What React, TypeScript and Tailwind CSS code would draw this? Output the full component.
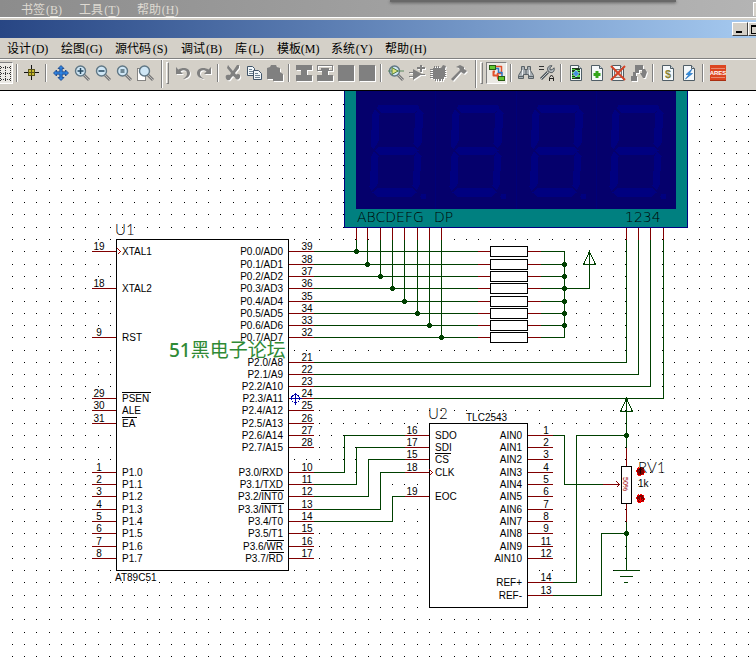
import React from 'react';
import clsx from 'clsx';

type MenuEntry = { label: string; hotkey: string };

const outerMenu: MenuEntry[] = [
  { label: '书签', hotkey: 'B' },
  { label: '工具', hotkey: 'T' },
  { label: '帮助', hotkey: 'H' },
];

const mainMenu: MenuEntry[] = [
  { label: '设计', hotkey: 'D' },
  { label: '绘图', hotkey: 'G' },
  { label: '源代码', hotkey: 'S' },
  { label: '调试', hotkey: 'B' },
  { label: '库', hotkey: 'L' },
  { label: '模板', hotkey: 'M' },
  { label: '系统', hotkey: 'Y' },
  { label: '帮助', hotkey: 'H' },
];

const MenuItem: React.FC<MenuEntry & { underline?: boolean }> = ({ label, hotkey, underline }) => (
  <button className="flex items-baseline whitespace-nowrap text-[12px] leading-4">
    {label}
    <span className="flex w-[18px] justify-center font-['Liberation_Serif',serif] text-[12px]">
      (<span className={clsx(underline && 'underline underline-offset-2')}>{hotkey}</span>)
    </span>
  </button>
);

/* ---------- Toolbar icons ---------- */

const Disabled: React.FC<{ children: React.ReactNode }> = ({ children }) => (
  <>
    <g transform="translate(1 1)" fill="#fff">{children}</g>
    <g fill="#808080">{children}</g>
  </>
);

const Lens: React.FC<{ children?: React.ReactNode }> = ({ children }) => (
  <>
    <path d="M10 10l5 5" stroke="#777" strokeWidth="3" />
    <path d="M10 10l5 5" stroke="#b9b9b9" strokeWidth="1" />
    <circle cx="6.5" cy="6" r="5" fill="#cfe6f5" stroke="#5f7684" strokeWidth="1.4" />
    {children}
  </>
);

const Page: React.FC<{ children?: React.ReactNode }> = ({ children }) => (
  <>
    <path d="M2.5 .5h8l3 3v12h-11z" fill="#f4f8fa" stroke="#4f5d66" />
    <path d="M10.5 .5v3h3" fill="#cfd8dd" stroke="#4f5d66" />
    {children}
  </>
);

const icons: Record<string, React.ReactNode> = {
  grid: (
    <path
      d="M4 2.500h12M4 8.500h12M4 14.500h12M5.500 1v15M10.500 1v15M15.500 1v15"
      stroke="#333"
      strokeDasharray="1 1"
    />
  ),
  origin: (
    <>
      <path d="M7.500 0v15M0 7.500h15" stroke="#111" />
      <rect x="4.500" y="4.500" width="6" height="6" fill="#c9bb2e" stroke="#5b5518" />
      <path d="M7.500 5v5M5 7.500h5" stroke="#5b5518" />
    </>
  ),
  move: (
    <path
      d="M8 .5l3 3H9.200v3.300h3.300V5l3 3-3 3V9.200H9.200v3.300H11l-3 3-3-3h1.800V9.200H3.500V11l-3-3 3-3v1.800h3.300V3.500H5z"
      fill="#2f83e0"
      stroke="#123f86"
      strokeWidth=".8"
    />
  ),
  zoomIn: <Lens><path d="M6.500 3v6M3.500 6h6" stroke="#24475e" strokeWidth="1.500" /></Lens>,
  zoomOut: <Lens><path d="M3.500 6h6" stroke="#24475e" strokeWidth="1.500" /></Lens>,
  zoomAll: <Lens><rect x="4.500" y="4" width="4" height="4" fill="#6f8794" /></Lens>,
  zoomArea: (
    <>
      <rect x=".5" y="3.500" width="8" height="12" fill="#fff" stroke="#222" strokeDasharray="1 1" />
      <g transform="translate(1 0)"><Lens /></g>
    </>
  ),
  undo: (
    <Disabled>
      <path d="M1 2v7h7L5.500 6.500C8 4.500 12 5 12 8.500c0 2.500-1.500 3.500-4 5.500 4-.5 7-2.500 7-6 0-5-7-6.500-11.500-3.500z" />
    </Disabled>
  ),
  redo: (
    <Disabled>
      <path d="M15 2v7H8l2.500-2.500C8 4.500 4 5 4 8.500c0 2.500 1.500 3.500 4 5.500-4-.5-7-2.500-7-6 0-5 7-6.500 11.500-3.500z" />
    </Disabled>
  ),
  cut: (
    <Disabled>
      <path d="M3 0l5 6 4-6h2v3l-4 5 1 1.500c3-1.500 5 .5 4 3s-4 3-5 0L8 11l-2 2c-1 3-4 3-5 .5s0-4.500 4-3.500L6 8 2 3z" />
    </Disabled>
  ),
  copy: (
    <>
      <path d="M1.500 1.500h5l2 2v7h-7z" fill="#f3f8fb" stroke="#405468" />
      <path d="M3 4.500h3M3 6.500h4M3 8.500h4" stroke="#6f8494" />
      <path d="M7.500 5.500h5l3 3v6h-8z" fill="#f3f8fb" stroke="#405468" />
      <path d="M9 8.500h3M9 10.500h5M9 12.500h5" stroke="#6f8494" />
    </>
  ),
  paste: (
    <Disabled>
      <path d="M0 3l3-1 1-2h5l1 2 3 1v4l3 2v7H6v-2H0z" />
    </Disabled>
  ),
  blockCopy: <Disabled><path d="M0 0h16v5h-5v5h5v6H0v-6h5V5H0z" /></Disabled>,
  blockMove: (
    <Disabled>
      <path fillRule="evenodd" d="M0 0h16v6h-5v4h5v6H0v-6h5V6H0zM1 1v4h3V3h8v2h3V1z" />
    </Disabled>
  ),
  block: <Disabled><path d="M0 0h16v16H0z" /></Disabled>,
  pick: (
    <Lens>
      <path d="M0 6h4M9 6h7" stroke="#5c8a5f" />
      <path d="M4 2.500L10 6 4 9.500z" fill="#e0e37d" stroke="#4f7d42" />
    </Lens>
  ),
  makeDevice: (
    <Disabled>
      <path d="M4 4l9 5-9 6v-3H0v-1h4V8H0V7h4zM12 9h4v1h-4zM11 0h2v2h3v2h-3v3h-2V4H8V2h3z" />
    </Disabled>
  ),
  packaging: (
    <Disabled>
      <path d="M3 3h1V1h1v2h1V1h1v2h1V1h1v2h2l2-3 3 1-1 3v1h1v1h-1v1h1v1h-1v1h1v1h-1v1h1v1h-2v2h-1v2h-1v-2h-1v2H9v-2H8v2H7v-2H6v2H5v-2H3v-1H0v-1h3v-1H0v-1h3V9H0V8h3V7H0V6h3V5H0V4h3z" />
    </Disabled>
  ),
  hammer: (
    <Disabled>
      <path d="M5 2l4-2 4 2v2l3 2-3 3-3-2-8 9-2-2 9-9-1-2z" />
    </Disabled>
  ),
  autoRoute: (
    <>
      <path d="M6 6.500h-1.500v4H9v4" stroke="#e2502a" strokeWidth="2" strokeLinejoin="round" />
      <path d="M7 1.500h5.500v7H8.500v4" stroke="#e2502a" strokeWidth="1.500" strokeLinejoin="round" />
      <path d="M7 3.500h2.500v4h3.500v4" stroke="#2e76c7" strokeWidth="1.500" strokeLinejoin="round" />
      <rect x=".5" y=".5" width="6" height="4" fill="#62c932" stroke="#285c14" />
      <rect x="9.500" y="11.500" width="6" height="4" fill="#62c932" stroke="#285c14" />
    </>
  ),
  find: (
    <>
      <path d="M3.500 1.500h3v3h3v-3h3v4l3 5v3h-5v-4h-5v4h-5v-3l3-5z" fill="#a9b0b5" stroke="#5a6368" />
      <path d="M4.500 5v5M11.500 5v5" stroke="#eef2f4" />
      <path d="M1 11.500h4M11 11.500h4M8 4v6" stroke="#5a6368" />
    </>
  ),
  property: (
    <>
      <path d="M0 1.500h5M0 4.500h5" stroke="#333" />
      <path d="M2 14l7-7" stroke="#4c545a" strokeWidth="3" />
      <path d="M2 14l7-7" stroke="#c3c9cc" />
      <path d="M13 .8l-2 2v2h2l2-2c1 4-2 6-5 4-3-2-1-7 3-6z" fill="#b7bdc1" stroke="#4c545a" />
      <path d="M10.500 16v-3.500l2-2.500 2 2.500V16M10.500 13.500h4" stroke="#222" />
    </>
  ),
  explorer: (
    <Page>
      <path d="M4 3h7v1h1v10H4z" fill="#1d3a1c" />
      <path d="M4 4.500h3l1 1h4M4 7.500h2M10 7.500h2M4 10.500h2M10 10.500h2M4 12.500h3l1-1h4" stroke="#53e04a" />
      <path d="M8 5l3 3.500L8 12 5 8.500z" fill="#3d8fe0" stroke="#bde8e4" strokeWidth=".8" />
    </Page>
  ),
  newSheet: <Page><path d="M8 6v7M4.500 9.500h7" stroke="#34a51d" strokeWidth="3" /></Page>,
  deleteSheet: (
    <>
      <Page><path d="M4.500 4.500h7v8h-7z" fill="#ddd" stroke="#777" /></Page>
      <path d="M1 1l14 14M15 1L1 15" stroke="#d54327" strokeWidth="2" />
    </>
  ),
  exitSheet: (
    <Disabled>
      <path d="M4 0h8v4h2l2 3-2 6h-2l-3-5h2V5H8v3H5v3h1v5H0v-5h2V7h2z" />
    </Disabled>
  ),
  bom: (
    <Page>
      <text x="8" y="13" textAnchor="middle" fill="#8b8433" className="font-['Liberation_Sans',sans-serif] text-[11px] font-bold">$</text>
    </Page>
  ),
  electrical: <Page><path d="M11 4L5 9.500h3L4.500 14l7-5.500h-3z" fill="#3195ea" stroke="#1967b5" strokeWidth=".6" /></Page>,
  ares: (
    <>
      <rect width="16" height="16" fill="#dc4520" />
      <path d="M0 15.500h16" stroke="#a92f12" />
      <path d="M1 3.500h14M1 12.500h14" stroke="#e98a70" />
      <text x="8" y="10" textAnchor="middle" fill="#fff" className="font-['Liberation_Sans',sans-serif] text-[6px] font-bold">ARES</text>
    </>
  ),
};

// "|" is a plain separator, "||" ends one toolbar and starts the next
const toolbar = [
  'grid', '|', 'origin', '|', 'move', 'zoomIn', 'zoomOut', 'zoomAll', 'zoomArea', '||',
  'undo', 'redo', '|', 'cut', 'copy', 'paste', '|', 'blockCopy', 'blockMove', 'block', 'block', '|',
  'pick', 'makeDevice', 'packaging', 'hammer', '||',
  'autoRoute', '|', 'find', 'property', '|', 'explorer', 'newSheet', 'deleteSheet', 'exitSheet', '|',
  'bom', 'electrical', '|', 'ares',
];

const pressed = ['grid', 'autoRoute'];

const Toolbar: React.FC = () => (
  <div className="flex h-[30px] items-center overflow-hidden border-t border-white pb-1">
    <div className="-ml-2 flex h-full items-center">
      {toolbar.map((name, i) => {
        if (name === '|') {
          return (
            <div key={i} className="flex h-[18px] w-2 shrink-0 justify-center">
              <div className="w-[2px] border-l border-r border-l-[#808080] border-r-white" />
            </div>
          );
        }
        if (name === '||') {
          return (
            <div key={i} className="flex h-[30px] w-[17px] shrink-0 items-center pl-[6px]">
              <div className="h-full w-[2px] border-l border-r border-l-[#808080] border-r-white" />
              <div className="ml-[3px] h-[22px] w-[3px] border border-t-white border-r-[#808080] border-b-[#808080] border-l-white" />
            </div>
          );
        }
        return (
          <button
            key={i}
            aria-label={name}
            className={clsx(
              'flex h-[22px] w-[21px] shrink-0 items-center justify-center',
              pressed.includes(name) && 'border border-t-[#808080] border-r-white border-b-white border-l-[#808080] bg-[#ebe9e4]'
            )}
          >
            <svg width="16" height="16" viewBox="0 0 16 16" fill="none" className="shrink-0 overflow-visible">
              {icons[name]}
            </svg>
          </button>
        );
      })}
    </div>
  </div>
);

/* ---------- Schematic ---------- */

const WIRE = '#004000';
const PIN = '#800000';

// screen position of each row of the snap grid
const ROWS = [
  239, 251, 264, 276, 288, 301, 313, 325, 337, 350, 362, 374, 386, 398, 410, 423, 435, 447,
  459, 472, 484, 496, 509, 521, 533, 546, 558, 570, 582, 595, 607, 619, 632, 644, 656,
];
const rowAt = (n: number) => {
  if (n < 0) return Math.floor(239.5 + n * 12.27);
  return n < ROWS.length ? ROWS[n] : Math.floor(656 + (n - 34) * 12.27);
};

let dots = '';
for (let r = -11; r < 90; r++) {
  for (let c = 1; c < 160; c++) {
    dots += `M${Math.floor(c * 12.272)} ${rowAt(r)}h1v1h-1z`;
  }
}

// [pin number, name, grid row, end of the overline]
type Pin = [string, string, number, number?];

const u1Left: Pin[] = [
  ['19', 'XTAL1', 1], ['18', 'XTAL2', 4], ['9', 'RST', 8],
  ['29', 'PSEN', 13, 150], ['30', 'ALE', 14], ['31', 'EA', 15, 136],
  ['1', 'P1.0', 19], ['2', 'P1.1', 20], ['3', 'P1.2', 21], ['4', 'P1.3', 22],
  ['5', 'P1.4', 23], ['6', 'P1.5', 24], ['7', 'P1.6', 25], ['8', 'P1.7', 26],
];

const u1Right: Pin[] = [
  ['39', 'P0.0/AD0', 1], ['38', 'P0.1/AD1', 2], ['37', 'P0.2/AD2', 3], ['36', 'P0.3/AD3', 4],
  ['35', 'P0.4/AD4', 5], ['34', 'P0.5/AD5', 6], ['33', 'P0.6/AD6', 7], ['32', 'P0.7/AD7', 8],
  ['21', 'P2.0/A8', 10], ['22', 'P2.1/A9', 11], ['23', 'P2.2/A10', 12], ['24', 'P2.3/A11', 13],
  ['25', 'P2.4/A12', 14], ['26', 'P2.5/A13', 15], ['27', 'P2.6/A14', 16], ['28', 'P2.7/A15', 17],
  ['10', 'P3.0/RXD', 19], ['11', 'P3.1/TXD', 20], ['12', 'P3.2/INT0', 21, 260], ['13', 'P3.3/INT1', 22, 260],
  ['14', 'P3.4/T0', 23], ['15', 'P3.5/T1', 24], ['16', 'P3.6/WR', 25, 266], ['17', 'P3.7/RD', 26, 268],
];

const u2Left: Pin[] = [
  ['16', 'SDO', 16], ['17', 'SDI', 17], ['15', 'CS', 18, 450], ['18', 'CLK', 19], ['19', 'EOC', 21],
];

const u2Right: Pin[] = [
  ['1', 'AIN0', 16], ['2', 'AIN1', 17], ['3', 'AIN2', 18], ['4', 'AIN3', 19], ['5', 'AIN4', 20],
  ['6', 'AIN5', 21], ['7', 'AIN6', 22], ['8', 'AIN7', 23], ['9', 'AIN8', 24], ['11', 'AIN9', 25],
  ['12', 'AIN10', 26], ['14', 'REF+', 28], ['13', 'REF-', 29],
];

type PinsProps = { pins: Pin[]; edge: number; side: 'left' | 'right' };

const PinLines: React.FC<PinsProps> = ({ pins, edge, side }) => (
  <>
    {pins.map(([num, , row, bar]) => {
      const y = ROWS[row];
      const left = side === 'left';
      return (
        <g key={num}>
          <path d={left ? `M${edge - 25} ${y}H${edge - 1}` : `M${edge} ${y}H${edge + 25}`} stroke={PIN} />
          {bar && <path d={`M${left ? edge + 5 : edge - 5} ${y - 6}H${bar}`} stroke="#000" />}
        </g>
      );
    })}
  </>
);

const PinTexts: React.FC<PinsProps> = ({ pins, edge, side }) => (
  <>
    {pins.map(([num, name, row]) => {
      const y = ROWS[row];
      const left = side === 'left';
      return (
        <g key={num}>
          <text x={left ? edge - 17 : edge + 19} y={y - 1} textAnchor="middle">{num}</text>
          <text x={left ? edge + 6 : edge - 5} y={y + 4} textAnchor={left ? 'start' : 'end'}>{name}</text>
        </g>
      );
    })}
  </>
);

const pinGroups: PinsProps[] = [
  { pins: u1Left, edge: 116, side: 'left' },
  { pins: u1Right, edge: 288, side: 'right' },
  { pins: u2Left, edge: 429, side: 'left' },
  { pins: u2Right, edge: 527, side: 'right' },
];

const Junction: React.FC<{ x: number; y: number }> = ({ x, y }) => (
  <path d={`M${x - 1} ${y - 2}h2l1 1v2l-1 1h-2l-1 -1v-2z`} fill={WIRE} stroke={WIRE} />
);

const Supply: React.FC<{ x: number; y: number }> = ({ x, y }) => (
  <path d={`M${x} ${y}L${x - 6} ${y + 13}H${x + 6}Z`} stroke={WIRE} />
);

const Digit: React.FC<{ x: number }> = ({ x }) => (
  <g transform={`translate(${x} 0)`} fill="#000080">
    <path d="M22 104H61L63 107L58 112H24L20 108Z" />
    <path d="M18 109L23 114L22 141L17 149L14 145L16 113Z" />
    <path d="M62 108L67 113L65 143L61 148L57 143L59 113Z" />
    <path d="M18 150L23 146H57L62 150L57 154H22Z" />
    <path d="M17 151L22 156L21 184L15 191L13 186L15 156Z" />
    <path d="M60 151L65 156L63 185L60 190L56 185L58 156Z" />
    <path d="M16 192L22 187H55L60 192L55 196H20Z" />
    <circle cx="67" cy="196" r="3" />
  </g>
);

const ledPins = [356, 367, 380, 392, 404, 417, 429, 441];
const commonPins = [626, 638, 650, 663];

const Display: React.FC = () => (
  <>
    <rect x="344" y="60" width="343" height="167" fill="#008080" stroke="#000080" />
    <rect x="356" y="60" width="319" height="148" fill="#05006c" stroke="#05006c" />
    <path d="M435 60V208M516 60V208M596 60V208" stroke="#000078" />
    {[356, 436, 516, 596].map((x) => <Digit key={x} x={x} />)}
  </>
);

const Wires: React.FC = () => (
  <g stroke={WIRE}>
    {ledPins.map((x, i) => {
      const y = ROWS[i + 1];
      return (
        <g key={x}>
          <path d={`M313 ${y}H478M540 ${y}H564M${x} 239V${y}`} />
          <path d={`M${x} 227V239M477 ${y}H490M527 ${y}H540`} stroke={PIN} />
          <rect x="490" y={y - 5} width="37" height="10" fill="#fff" stroke="#000" />
          <Junction x={x} y={y} />
          {i > 0 && i < 7 && <Junction x={564} y={y} />}
        </g>
      );
    })}
    {commonPins.map((x, i) => (
      <g key={x}>
        <path d={`M313 ${ROWS[i + 10]}H${x}V239`} />
        <path d={`M${x} 227V239`} stroke={PIN} />
      </g>
    ))}
    <path d="M564 251V337M564 288H589V251" />
    <Supply x={589} y={251} />

    {/* serial lines between the two chips */}
    <path d="M313 472H344V435H405M313 484H356V447H405M313 496H368V459H405M313 509H380V472H405M313 521H392V496H405" />

    {/* potentiometer and reference */}
    <path d="M552 435H564V484H602M552 582H576V435H626M552 595H601V533H626" />
    <path d="M626 398V447M626 521V570M613 570H639M619 576H632M623 582H627" />
    <Supply x={626} y={398} />
    <Junction x={626} y={435} />
    <Junction x={626} y={533} />
    <path d="M626 447V466M626 503V521M602 484H619M616 481L619 484L616 487" stroke={PIN} />
  </g>
);

const Knob: React.FC<{ y: number; down?: boolean }> = ({ y, down }) => (
  <g>
    <circle cx="640" cy={y} r="4" fill="#800000" stroke="#f00" strokeDasharray="2 1" />
    <path
      d={down ? `M640 ${y - 2}V${y + 3}M638 ${y + 1}L640 ${y + 3}L642 ${y + 1}` : `M640 ${y + 2}V${y - 3}M638 ${y - 1}L640 ${y - 3}L642 ${y - 1}`}
      stroke={down ? '#f00' : '#300'}
    />
  </g>
);

const Schematic: React.FC = () => (
  <svg
    className="block min-h-[540px] w-full flex-1 bg-white font-['Liberation_Sans',sans-serif] text-[10px]"
    fill="none"
    role="img"
    aria-label="AT89C51 TLC2543"
  >
    <path d={dots} fill="#000" transform="translate(0 -91)" shapeRendering="crispEdges" />

    <g transform="translate(0.5 -90.5)" shapeRendering="crispEdges">
      <rect x="116" y="239" width="172" height="331" fill="#fff" stroke="#000" />
      <rect x="429" y="423" width="98" height="184" fill="#fff" stroke="#000" />
      <Wires />
      <Display />
      {pinGroups.map((g, i) => <PinLines key={i} {...g} />)}
      <rect x="621" y="466" width="10" height="37" fill="#fff" stroke="#000" />
      <path d="M117 248L120 251L117 254M429 469L432 472L429 475" stroke="#a00000" />
      <Knob y={471} />
      <Knob y={498} down />
      <g stroke="#0000a8">
        <circle cx="295" cy="398" r="4" />
        <path d="M295 392V404M289 398H301" />
      </g>
    </g>

    <g transform="translate(0 -91)" fill="#000">
      {pinGroups.map((g, i) => <PinTexts key={i} {...g} />)}
      <g className="font-['DejaVu_Sans',sans-serif] text-[14px] font-extralight">
        <text x="357" y="222">ABCDEFG</text>
        <text x="434" y="222">DP</text>
        <text x="625" y="222">1234</text>
      </g>
      <text x="115" y="581">AT89C51</text>
      <text x="466" y="421">TLC2543</text>
      <g className="font-['Lato',sans-serif] text-[15px] font-light">
        <text x="115" y="235">U1</text>
        <text x="428" y="419">U2</text>
        <text x="638" y="473">RV1</text>
      </g>
      <text x="638" y="487">1k</text>
      <text transform="translate(623 477) rotate(90)" fill="#a00000" className="text-[7px]">50%</text>
      <text x="169" y="357" fill="#2f8a35" className="font-['Noto_Sans','Noto_Sans_CJK_SC',sans-serif] text-[19px]">
        <tspan className="font-medium">51</tspan>黑电子论坛
      </text>
    </g>
  </svg>
);

const App: React.FC = () => {
  return (
    <div className="flex min-h-screen flex-col overflow-hidden bg-[#d4d0c8] font-['Noto_Sans_CJK_SC',sans-serif] text-black">
      {/* Window behind */}
      <div className="relative flex h-[17px] items-start justify-between bg-linear-to-r from-[#8c8c8c] to-[#b4b4b4] text-[#dedad2]">
        <div className="absolute top-0 right-20 left-[390px] h-[2px] bg-[#686868] shadow-[0_1px_3px_#555]" />
        <nav className="flex gap-4 pt-px pl-[21px]">
          {outerMenu.map((m) => <MenuItem key={m.label} {...m} underline />)}
        </nav>
        <div className="mt-[2px] h-[14px] w-[3px] border-t border-l border-white bg-[#d4d0c8]" />
      </div>

      {/* Title bar */}
      <div className="h-[3px] border-t border-white" />
      <div className="flex h-[18px] items-center justify-end overflow-hidden bg-linear-to-r from-[#284684] to-[#a6caf0]">
        <div className="-mr-2 flex">
          <button
            aria-label="minimize"
            className="flex h-[14px] w-4 items-end border border-t-white border-r-[#404040] border-b-[#404040] border-l-white bg-[#d4d0c8] pb-[2px] pl-[3px]"
          >
            <span className="h-[2px] w-[6px] bg-black" />
          </button>
          <button
            aria-label="maximize"
            className="flex h-[14px] w-4 items-center border border-t-white border-r-[#404040] border-b-[#404040] border-l-white bg-[#d4d0c8] pl-[2px]"
          >
            <span className="h-[9px] w-[9px] border border-t-2 border-black" />
          </button>
        </div>
      </div>

      {/* Menu */}
      <nav className="flex h-[21px] items-center gap-3 border-b border-[#808080] pl-[7px]">
        {mainMenu.map((m) => <MenuItem key={m.label} {...m} />)}
      </nav>

      <Toolbar />
      <div className="h-[2px] border-b border-black" />
      <Schematic />
    </div>
  );
};

export default App;
